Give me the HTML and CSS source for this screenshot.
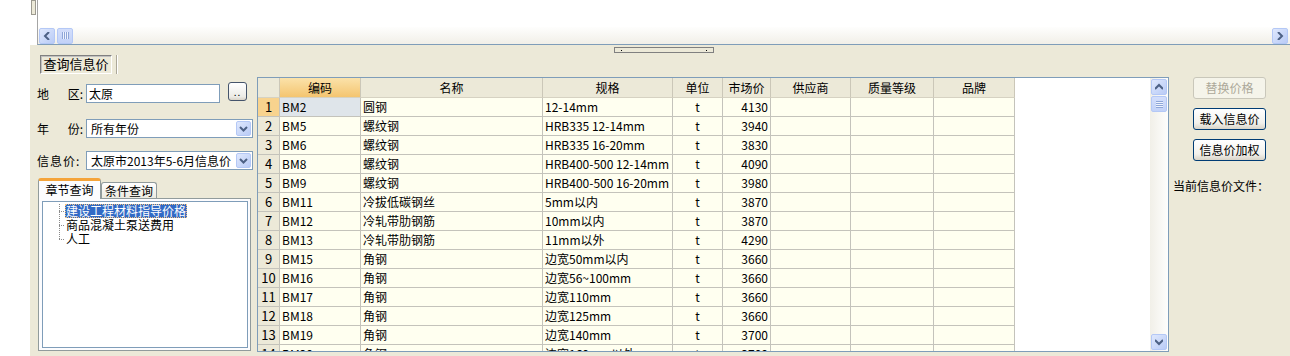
FILE: index.html
```html
<!DOCTYPE html>
<html lang="zh-CN">
<head>
    <meta charset="UTF-8">
    <title>查询信息价</title>
    <link rel="stylesheet" href="styles.css">
</head>
<body>
<div class="screen">
    <div class="top">
        <div class="top-edge"><span class="edge-thumb"></span></div>
        <div class="top-view">
            <div class="top-blank"></div>
            <div class="hscroll">
                <span class="sb-btn"><svg width="8" height="8" viewBox="0 0 8 8"><path d="M6 0L2 4l4 4" fill="none" stroke="#4d6185" stroke-width="2"/></svg></span>
                <span class="sb-thumb"><span class="grip-v"></span></span>
                <span class="track"></span>
                <span class="sb-btn"><svg width="8" height="8" viewBox="0 0 8 8"><path d="M2 0l4 4-4 4" fill="none" stroke="#4d6185" stroke-width="2"/></svg></span>
            </div>
        </div>
    </div>

    <div class="splitter"><span class="handle"><i></i><i></i></span></div>

    <div class="tabbar">
        <span class="page-tab">查询信息价</span>
        <span class="tab-sep"></span>
    </div>

    <div class="main">
        <!-- 左侧查询条件 -->
        <div class="side">
            <div class="field first">
                <label class="lbl"><span>地</span><span>区:</span></label>
                <span class="input">太原</span>
                <span class="dots-btn">..</span>
            </div>
            <div class="field second">
                <label class="lbl"><span>年</span><span>份:</span></label>
                <span class="combo"><span class="combo-text">所有年份</span><span class="combo-btn"><svg width="9" height="8" viewBox="0 0 9 8"><path d="M1 2l3.5 3.5L8 2" fill="none" stroke="#4d6185" stroke-width="2"/></svg></span></span>
            </div>
            <div class="field third">
                <label class="lbl wide">信息价:</label>
                <span class="combo"><span class="combo-text">太原市2013年5-6月信息价（太原）</span><span class="combo-btn"><svg width="9" height="8" viewBox="0 0 9 8"><path d="M1 2l3.5 3.5L8 2" fill="none" stroke="#4d6185" stroke-width="2"/></svg></span></span>
            </div>

            <div class="tabs">
                <span class="tab active">章节查询</span>
                <span class="tab">条件查询</span>
            </div>
            <div class="tab-page">
                <ul class="tree">
                    <li><span class="twig"></span><span class="node selected">建设工程材料指导价格</span></li>
                    <li><span class="twig"></span><span class="node">商品混凝土泵送费用</span></li>
                    <li class="last"><span class="twig"></span><span class="node">人工</span></li>
                </ul>
            </div>
        </div>

        <!-- 信息价表格 -->
        <div class="grid">
            <div class="sheet">
                <div class="row head">
                    <span class="rn"></span>
                    <span class="hot">编码</span>
                    <span>名称</span>
                    <span>规格</span>
                    <span>单位</span>
                    <span>市场价</span>
                    <span>供应商</span>
                    <span>质量等级</span>
                    <span>品牌</span>
                </div>
                <div class="row current"><span class="rn">1</span><span class="code">BM2</span><span>圆钢</span><span>12-14mm</span><span class="c">t</span><span class="r">4130</span><span></span><span></span><span></span></div>
                <div class="row"><span class="rn">2</span><span>BM5</span><span>螺纹钢</span><span>HRB335 12-14mm</span><span class="c">t</span><span class="r">3940</span><span></span><span></span><span></span></div>
                <div class="row"><span class="rn">3</span><span>BM6</span><span>螺纹钢</span><span>HRB335 16-20mm</span><span class="c">t</span><span class="r">3830</span><span></span><span></span><span></span></div>
                <div class="row"><span class="rn">4</span><span>BM8</span><span>螺纹钢</span><span>HRB400-500 12-14mm</span><span class="c">t</span><span class="r">4090</span><span></span><span></span><span></span></div>
                <div class="row"><span class="rn">5</span><span>BM9</span><span>螺纹钢</span><span>HRB400-500 16-20mm</span><span class="c">t</span><span class="r">3980</span><span></span><span></span><span></span></div>
                <div class="row"><span class="rn">6</span><span>BM11</span><span>冷拔低碳钢丝</span><span>5mm以内</span><span class="c">t</span><span class="r">3870</span><span></span><span></span><span></span></div>
                <div class="row"><span class="rn">7</span><span>BM12</span><span>冷轧带肋钢筋</span><span>10mm以内</span><span class="c">t</span><span class="r">3870</span><span></span><span></span><span></span></div>
                <div class="row"><span class="rn">8</span><span>BM13</span><span>冷轧带肋钢筋</span><span>11mm以外</span><span class="c">t</span><span class="r">4290</span><span></span><span></span><span></span></div>
                <div class="row"><span class="rn">9</span><span>BM15</span><span>角钢</span><span>边宽50mm以内</span><span class="c">t</span><span class="r">3660</span><span></span><span></span><span></span></div>
                <div class="row"><span class="rn">10</span><span>BM16</span><span>角钢</span><span>边宽56~100mm</span><span class="c">t</span><span class="r">3660</span><span></span><span></span><span></span></div>
                <div class="row"><span class="rn">11</span><span>BM17</span><span>角钢</span><span>边宽110mm</span><span class="c">t</span><span class="r">3660</span><span></span><span></span><span></span></div>
                <div class="row"><span class="rn">12</span><span>BM18</span><span>角钢</span><span>边宽125mm</span><span class="c">t</span><span class="r">3660</span><span></span><span></span><span></span></div>
                <div class="row"><span class="rn">13</span><span>BM19</span><span>角钢</span><span>边宽140mm</span><span class="c">t</span><span class="r">3700</span><span></span><span></span><span></span></div>
                <div class="row"><span class="rn">14</span><span>BM20</span><span>角钢</span><span>边宽160mm以外</span><span class="c">t</span><span class="r">3700</span><span></span><span></span><span></span></div>
            </div>
            <div class="vscroll">
                <span class="sb-btn"><svg width="8" height="8" viewBox="0 0 8 8"><path d="M0 6l4-4 4 4" fill="none" stroke="#4d6185" stroke-width="2"/></svg></span>
                <span class="sb-thumb"><span class="grip-h"></span></span>
                <span class="track"></span>
                <span class="sb-btn"><svg width="8" height="8" viewBox="0 0 8 8"><path d="M0 2l4 4 4-4" fill="none" stroke="#4d6185" stroke-width="2"/></svg></span>
            </div>
        </div>

        <!-- 右侧操作 -->
        <div class="actions">
            <span class="btn disabled">替换价格</span>
            <span class="btn">载入信息价</span>
            <span class="btn">信息价加权</span>
            <p class="file-label">当前信息价文件：</p>
        </div>
    </div>
</div>
</body>
</html>
```

FILE: styles.css
```css
* {
    box-sizing: border-box;
}
body {
    margin: 0;
    background: #fff;
    font: 12px/14px "Noto Sans CJK SC", "Liberation Sans", sans-serif;
    color: #000;
}
.screen {
    margin-left: 30px;
    width: 1260px;
    height: 356px;
    background: #ece9d8;
    display: flex;
    flex-direction: column;
    overflow: hidden;
}

/* top pane */
.top {
    height: 45px;
    display: flex;
    background: #fff;
}
.top-edge {
    width: 7px;
    padding: 0 1px;
}
.edge-thumb {
    display: block;
    height: 15px;
    border: 1px solid #9c9a90;
    background: #ece9d8;
}
.top-view {
    flex: 1;
    display: flex;
    flex-direction: column;
    border-left: 1px solid #a5a5a5;
    border-bottom: 1px solid #7f9db9;
}
.top-blank {
    flex: 1;
}
.hscroll {
    height: 17px;
    display: flex;
    align-items: center;
    gap: 2px;
    padding: 0 2px 0 1px;
    background: linear-gradient(#fefefd, #f1efe8);
}
.track {
    flex: 1;
}
.sb-btn {
    width: 16px;
    height: 16px;
    border: 1px solid #b4c8f6;
    border-radius: 2px;
    background: linear-gradient(135deg, #dfe8fd, #b9cbf6);
    display: flex;
    align-items: center;
    justify-content: center;
}
.sb-thumb {
    width: 16px;
    height: 16px;
    border: 1px solid #b4c8f6;
    border-radius: 2px;
    background: linear-gradient(#d3defb, #c2d2f8);
    display: flex;
    align-items: center;
    justify-content: center;
}
.grip-v {
    width: 7px;
    height: 7px;
    background: repeating-linear-gradient(to right, #8ea6d8 0 1px, #eef3fe 1px 2px);
}
.grip-h {
    width: 7px;
    height: 7px;
    background: repeating-linear-gradient(to bottom, #8ea6d8 0 1px, #eef3fe 1px 2px);
}

/* splitter */
.splitter {
    height: 10px;
    display: flex;
    justify-content: center;
    padding-left: 7px;
}
.handle {
    margin-top: 2px;
    width: 100px;
    height: 6px;
    border: 1px solid #808080;
    display: flex;
    justify-content: space-between;
    align-items: center;
    padding: 0 6px;
}
.handle i {
    width: 1px;
    height: 1px;
    background: #000;
}

/* page tab */
.tabbar {
    height: 19px;
    display: flex;
    align-items: stretch;
    padding-left: 10px;
}
.page-tab {
    width: 72px;
    border: 1px solid;
    border-color: #808080 #fff #fff #808080;
    box-shadow: inset 1px 1px 0 #c0c0c0;
    text-align: center;
    line-height: 16px;
    font-size: 13px;
}
.tab-sep {
    margin-left: 4px;
    width: 2px;
    border-left: 1px solid #aca899;
    border-right: 1px solid #fff;
}

/* main */
.main {
    height: 282px;
    display: flex;
}
.side {
    width: 227px;
}
.field {
    display: flex;
    align-items: center;
    height: 19px;
    padding-left: 7px;
}
.field.first {
    margin-top: 10px;
}
.field.second {
    margin-top: 16px;
}
.field.third {
    margin-top: 13px;
}
.lbl {
    width: 46px;
    margin-right: 3px;
    display: flex;
    justify-content: space-between;
    white-space: nowrap;
}
.lbl.wide {
    letter-spacing: 1px;
}
.input {
    width: 134px;
    height: 19px;
    border: 1px solid #7f9db9;
    background: #fff;
    padding-left: 2px;
    line-height: 17px;
}
.dots-btn {
    align-self: flex-start;
    margin: -2px 0 0 8px;
    width: 19px;
    height: 19px;
    border: 1px solid #45546b;
    border-radius: 3px;
    background: linear-gradient(#fff, #ecebe6 80%, #d8d2c6);
    text-align: center;
    line-height: 17px;
    font-size: 10px;
    letter-spacing: 1px;
}
.combo {
    width: 167px;
    height: 19px;
    border: 1px solid #7f9db9;
    background: #fff;
    display: flex;
    padding: 1px;
}
.combo-text {
    flex: 1;
    overflow: hidden;
    white-space: nowrap;
    padding-left: 3px;
    line-height: 15px;
}
.combo-btn {
    width: 15px;
    border: 1px solid #b4c8f6;
    border-radius: 2px;
    background: linear-gradient(135deg, #dfe8fd, #b9cbf6);
    display: flex;
    align-items: center;
    justify-content: center;
}

/* chapter tabs */
.tabs {
    margin-top: 8px;
    height: 20px;
    padding-left: 8px;
    display: flex;
    align-items: flex-end;
}
.tab {
    height: 16px;
    width: 56px;
    border: 1px solid #919b9c;
    border-bottom: none;
    border-radius: 3px 3px 0 0;
    background: linear-gradient(#fff, #eceae0);
    text-align: center;
    line-height: 15px;
}
.tab.active {
    height: 21px;
    width: 63px;
    margin-bottom: -1px;
    border-top: 3px solid #f5a43a;
    background: #fcfcfe;
    line-height: 17px;
    position: relative;
}
.tab-page {
    margin-left: 8px;
    width: 213px;
    height: 153px;
    border: 1px solid #919b9c;
    background: #fcfcfe;
    padding: 2px 2px 2px 3px;
}
.tree {
    margin: 0;
    height: 100%;
    list-style: none;
    border: 1px solid #7f9db9;
    background: #fff;
    padding: 2px 0 0 16px;
}
.tree li {
    display: flex;
    height: 14px;
}
.twig {
    width: 6px;
    background:
        repeating-linear-gradient(to bottom, #8a8a8a 0 1px, transparent 1px 2px) left top / 1px 100% no-repeat,
        repeating-linear-gradient(to right, #8a8a8a 0 1px, transparent 1px 2px) left center / 100% 1px no-repeat;
}
.tree li.last .twig {
    background:
        repeating-linear-gradient(to bottom, #8a8a8a 0 1px, transparent 1px 2px) left top / 1px 50% no-repeat,
        repeating-linear-gradient(to right, #8a8a8a 0 1px, transparent 1px 2px) left center / 100% 1px no-repeat;
}
.node {
    padding: 0 1px;
    line-height: 14px;
    white-space: nowrap;
}
.node.selected {
    background: #316ac5;
    color: #fff;
    outline: 1px dotted #f0c080;
    outline-offset: -1px;
}

/* grid */
.grid {
    width: 912px;
    height: 275px;
    margin-top: 3px;
    border: 1px solid #7f9db9;
    background: #fff;
    display: flex;
}
.sheet {
    flex: 1;
    overflow: hidden;
}
.row {
    display: grid;
    grid-template-columns: 22px 81px 182px 130px 50px 48px 80px 83px 81px;
    width: 757px;
    height: 19px;
}
.row span {
    border-right: 1px solid #c4c3bb;
    border-bottom: 1px solid #c4c3bb;
    background: #fffff0;
    padding: 0 2px;
    line-height: 18px;
    white-space: nowrap;
    overflow: hidden;
}
.row .rn {
    background: #ece9d8;
    text-align: center;
    font-size: 13px;
}
.row .c {
    text-align: center;
}
.row .r {
    text-align: right;
}
.row.head {
    height: 20px;
}
.row.head span {
    background: #ece9d8;
    border-right-color: #cbc7b8;
    border-bottom-color: #d6d2c2;
    text-align: center;
    line-height: 19px;
}
.row.head .hot {
    background: linear-gradient(#fbe2aa, #f4c570);
}
.row.current .rn {
    background: #f8d38e;
}
.row.current .code {
    background: #dfe5ea;
}
.vscroll {
    width: 18px;
    display: flex;
    flex-direction: column;
    gap: 1px;
    padding: 1px;
    background: linear-gradient(to right, #f1efe8, #fefefd);
}
.vscroll .sb-btn,
.vscroll .sb-thumb {
    width: 16px;
    height: 16px;
}

/* actions */
.actions {
    flex: 1;
    padding-left: 4px;
}
.btn {
    display: block;
    width: 73px;
    height: 22px;
    margin: 9px 0 0 20px;
    border: 1px solid #003c74;
    border-radius: 3px;
    background: linear-gradient(#fff, #f2f1ec 70%, #d9d4c8);
    text-align: center;
    line-height: 20px;
}
.btn.disabled {
    margin-top: 3px;
    border-color: #c9c7ba;
    background: #f5f4ea;
    color: #aca899;
}
.file-label {
    margin: 18px 0 0;
    line-height: 14px;
    white-space: nowrap;
}
```
